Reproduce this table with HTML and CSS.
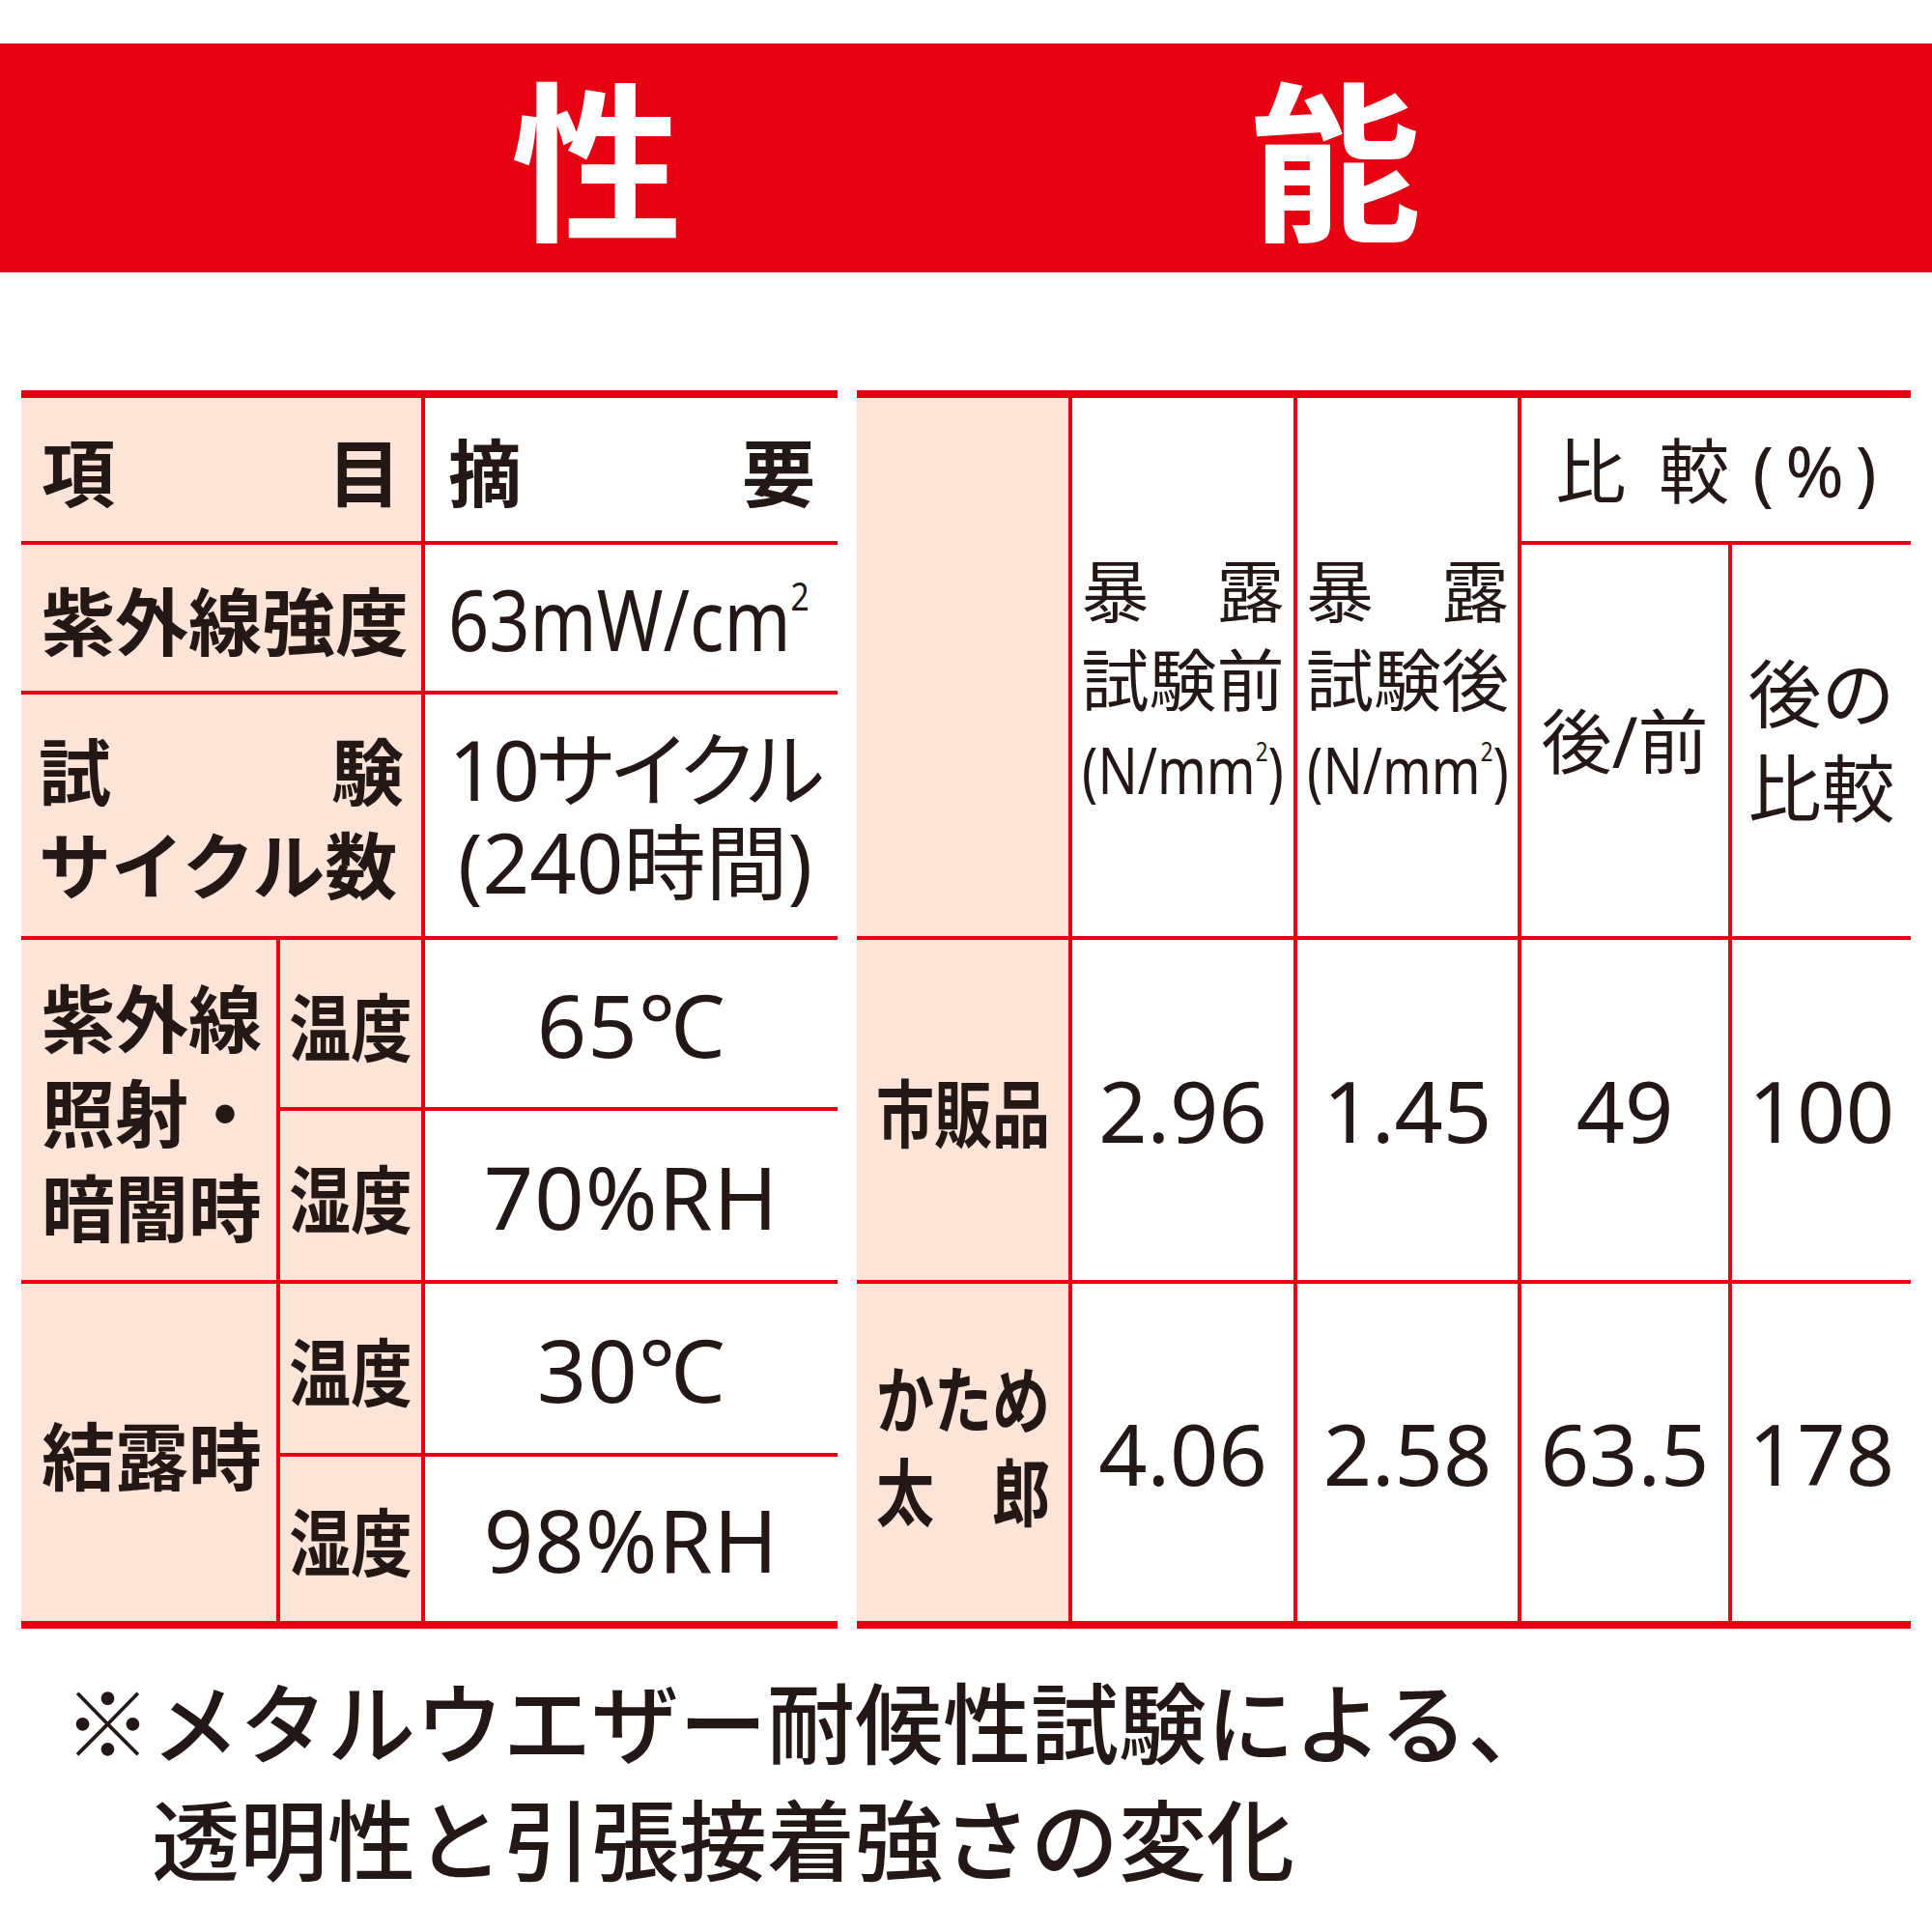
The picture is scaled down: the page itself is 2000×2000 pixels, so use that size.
FILE: index.html
```html
<!DOCTYPE html>
<html lang="ja">
<head>
<meta charset="utf-8">
<title>性能</title>
<link rel="stylesheet" href="styles.css">
</head>
<body>
<header class="banner"><span>性</span><span>能</span></header>

<main class="tables">
  <section class="grid spec">
    <div class="cell pink label spread-cell c2"><span>項</span><span>目</span></div>
    <div class="cell label spread-cell head-r"><span>摘</span><span>要</span></div>

    <div class="cell pink label left c2">紫外線強度</div>
    <div class="cell value left mw"><span class="mw-in">63mW/cm<span class="sup">2</span></span></div>

    <div class="cell pink label c2 cycle-label">
      <div class="line spread"><span>試</span><span>験</span></div>
      <div class="line">サイクル数</div>
    </div>
    <div class="cell value cycle">
      <div class="line cyc1">10サイクル</div>
      <div class="line">(240時間)</div>
    </div>

    <div class="cell pink label left r2 stack">
      <div class="line">紫外線</div>
      <div class="line">照射・</div>
      <div class="line">暗闇時</div>
    </div>
    <div class="cell pink label"><span class="narrow84">温度</span></div>
    <div class="cell value">65℃</div>
    <div class="cell pink label"><span class="narrow84">湿度</span></div>
    <div class="cell value">70%RH</div>

    <div class="cell pink label left r2">結露時</div>
    <div class="cell pink label"><span class="narrow84">温度</span></div>
    <div class="cell value">30℃</div>
    <div class="cell pink label"><span class="narrow84">湿度</span></div>
    <div class="cell value">98%RH</div>
  </section>

  <section class="grid result">
    <div class="cell pink r2"></div>
    <div class="cell rhead r2">
      <div class="block">
        <div class="line spread"><span>暴</span><span>露</span></div>
        <div class="line">試験前</div>
        <div class="line unit"><span class="unit-in">(N/mm<span class="usup">2</span>)</span></div>
      </div>
    </div>
    <div class="cell rhead r2">
      <div class="block">
        <div class="line spread"><span>暴</span><span>露</span></div>
        <div class="line">試験後</div>
        <div class="line unit"><span class="unit-in">(N/mm<span class="usup">2</span>)</span></div>
      </div>
    </div>
    <div class="cell rhead c2 compare"><span>比</span><span class="k2">較</span><span class="pct">(%)</span></div>
    <div class="cell rhead ratio">後/前</div>
    <div class="cell rhead stack2">
      <div class="line">後の</div>
      <div class="line">比較</div>
    </div>

    <div class="cell pink label"><span class="narrow79">市販品</span></div>
    <div class="cell num">2.96</div>
    <div class="cell num">1.45</div>
    <div class="cell num">49</div>
    <div class="cell num">100</div>

    <div class="cell pink label kata-cell">
      <div class="kata">
        <div class="line">かため</div>
        <div class="line spread"><span>太</span><span>郎</span></div>
      </div>
    </div>
    <div class="cell num">4.06</div>
    <div class="cell num">2.58</div>
    <div class="cell num">63.5</div>
    <div class="cell num">178</div>
  </section>
</main>

<p class="note">※メタルウエザー耐候性試験による、<br>透明性と引張接着強さの変化</p>
</body>
</html>
```

FILE: styles.css
```css
* {
  box-sizing: border-box;
  margin: 0;
  padding: 0;
}

body {
  width: 2000px;
  height: 2000px;
  background: #ffffff;
  color: #231815;
  font-family: "Noto Sans CJK JP", sans-serif;
  overflow: hidden;
}

.banner {
  margin-top: 45px;
  height: 237px;
  padding-bottom: 8px;
  background: #e60012;
  color: #ffffff;
  display: flex;
  justify-content: center;
  align-items: center;
  gap: 588px;
  font-size: 177px;
  font-weight: 700;
  line-height: 1;
}

.tables {
  display: flex;
  gap: 20px;
  margin: 122px 0 0 22px;
}

.grid {
  display: grid;
  gap: 4px;
  background: #e60012;
  padding: 8px 0;
}

.spec {
  width: 845px;
  grid-template-columns: 264px 146px 427px;
  grid-template-rows: 148px 151px 250px 173px 175px 175px 170px;
}

.result {
  width: 1091px;
  grid-template-columns: 219px 229px 228px 214px 185px;
  grid-template-rows: 148px 405px 352px 349px;
}

.cell {
  background: #ffffff;
  display: flex;
  align-items: center;
  justify-content: center;
  line-height: 1;
  white-space: nowrap;
}

.pink {
  background: #fde4d9;
}

.c2 {
  grid-column: span 2;
}

.r2 {
  grid-row: span 2;
}

.label {
  font-size: 76px;
  font-weight: 700;
}

.left {
  justify-content: flex-start;
  padding-left: 21px;
}

.spread-cell {
  justify-content: space-between;
  padding: 0 21px;
}

.head-r {
  padding: 0 23px 0 24px;
}

.spread {
  display: flex;
  justify-content: space-between;
}

.value {
  font-family: "Noto Sans", "Noto Sans CJK JP", sans-serif;
  font-size: 90px;
  font-weight: 400;
  letter-spacing: 1px;
}

.mw {
  padding-left: 24px;
  font-size: 88px;
  letter-spacing: 0;
}

.mw-in {
  display: inline-block;
  transform: scaleX(0.84);
  transform-origin: left center;
}

.sup {
  font-size: 40px;
  vertical-align: 42px;
  line-height: 0;
}

.cycle-label {
  flex-direction: column;
  align-items: stretch;
  padding: 0 18px;
  font-size: 75px;
}

.cycle-label .line {
  line-height: 97px;
}

.cycle {
  flex-direction: column;
  font-size: 85px;
  letter-spacing: 0;
  padding-left: 8px;
}

.cycle .line {
  line-height: 96px;
}

.cyc1 {
  font-feature-settings: "palt";
  letter-spacing: -3px;
}

.stack {
  flex-direction: column;
  align-items: flex-start;
  justify-content: center;
}

.stack .line {
  line-height: 98px;
}

.narrow84 {
  display: inline-block;
  transform: scaleX(0.84);
}

.narrow79 {
  display: inline-block;
  transform: scaleX(0.79);
}

.kata-cell {
  padding-bottom: 22px;
}

.kata {
  display: flex;
  flex-direction: column;
  width: 228px;
  transform: scaleX(0.79);
}

.kata .line {
  line-height: 96px;
}

.rhead {
  font-family: "Noto Sans", "Noto Sans CJK JP", sans-serif;
  font-weight: 400;
  font-size: 70px;
}

.block {
  display: flex;
  flex-direction: column;
  width: 210px;
  padding-top: 26px;
}

.rhead .block .line {
  line-height: 92px;
}

.unit {
  display: flex;
  justify-content: center;
}

.unit-in {
  display: inline-block;
  font-size: 68px;
  transform: scaleX(0.8);
}

.usup {
  font-size: 28px;
  vertical-align: 34px;
  line-height: 0;
}

.compare {
  font-size: 73px;
}

.k2 {
  margin-left: 34px;
}

.pct {
  margin-left: 24px;
  letter-spacing: 12px;
  margin-right: -12px;
}

.ratio {
  font-size: 73px;
}

.stack2 {
  flex-direction: column;
  font-size: 76px;
}

.stack2 .line {
  line-height: 98px;
}

.num {
  font-family: "Noto Sans", "Noto Sans CJK JP", sans-serif;
  font-size: 88px;
  font-weight: 400;
}

.note {
  margin: 33px 0 0 66px;
  padding-left: 91px;
  text-indent: -91px;
  font-size: 91px;
  font-weight: 500;
  line-height: 121px;
  white-space: nowrap;
}
```
